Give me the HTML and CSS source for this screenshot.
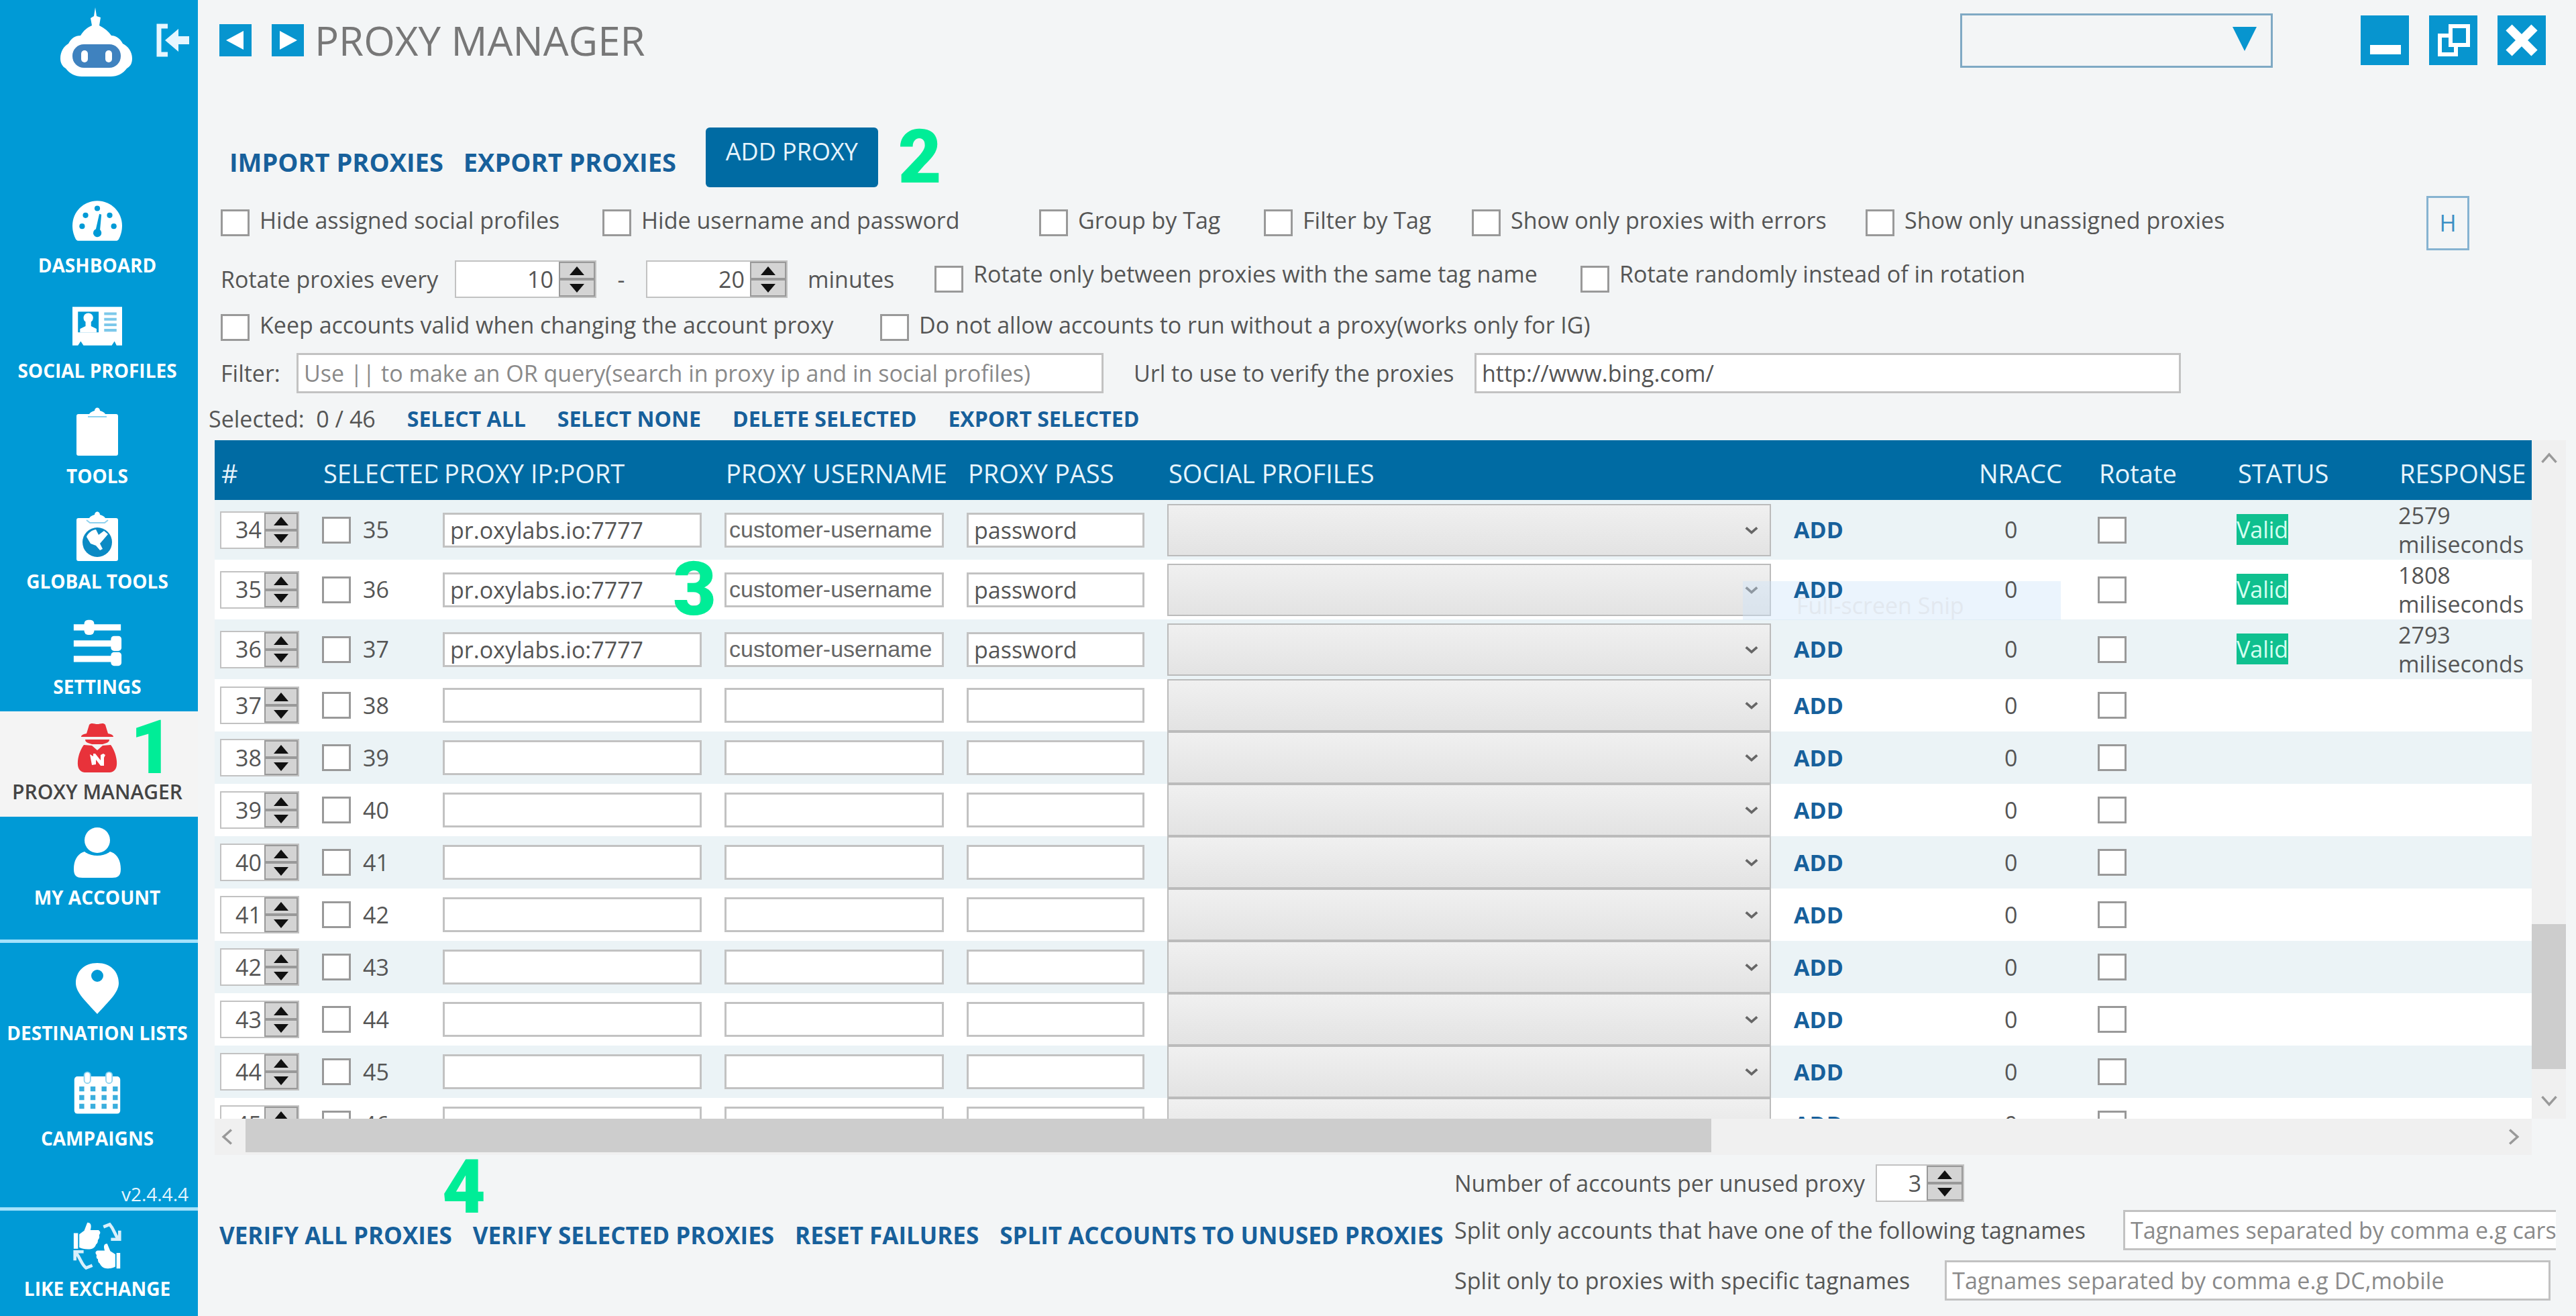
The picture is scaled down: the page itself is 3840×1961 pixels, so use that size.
FILE: index.html
```html
<!DOCTYPE html>
<html lang="en">
<head>
  <meta charset="UTF-8" />
  <meta name="viewport" content="width=device-width, initial-scale=1.0"/>
  <title>Proxy Manager</title>
  <link rel="stylesheet" href="styles.css">
</head>
<body>
  <!-- Sidebar -->
  <aside class="sidebar">
    <div class="brand">
      <svg class="logo" viewBox="0 0 110 104">
        <path fill="#fff" d="M53 0l2 13 6 2-2 12c8 4 14 9 18 15 8 0 14 6 17 12 8 4 14 12 14 22 0 8-3 12-8 15-6 8-14 12-24 12H33c-10 0-18-4-24-12-5-3-8-8-8-15 0-10 5-18 12-22 4-8 10-12 18-12 5-8 10-12 17-15l-2-11 5-3z"/>
        <rect x="19" y="55" width="72" height="35" rx="17" fill="#3f82bf"/>
        <rect x="32" y="64" width="10" height="18" rx="5" fill="#fff"/>
        <rect x="68" y="64" width="10" height="18" rx="5" fill="#fff"/>
      </svg>
      <button class="collapse" aria-label="Collapse menu">
        <svg viewBox="0 0 52 50"><path fill="none" stroke="#e6f6ff" stroke-width="7" d="M18 4H5v42h13"/><path fill="#e6f6ff" d="M14 25L34 8v11h16v12H34v11z"/></svg>
      </button>
    </div>
    <nav class="menu">
      <a href="#dashboard" class="item">
        <svg viewBox="0 0 72 64"><path fill="#fff" d="M36 3C16 3 0 19 0 39c0 8 2 14 5 20 1 1 2 2 4 2h54c2 0 3-1 4-2 3-6 5-12 5-20C72 19 56 3 36 3z"/><g fill="#009ad6"><circle cx="14" cy="40" r="4"/><circle cx="19" cy="24" r="4"/><circle cx="36" cy="14" r="4"/><circle cx="54" cy="24" r="4"/><circle cx="60" cy="40" r="4"/><path d="M39 22l3 1-2 22a6 6 0 1 1-6-1z"/></g></svg>
        DASHBOARD
      </a>
      <a href="#profiles" class="item">
        <svg viewBox="0 0 72 64"><path fill="#fff" d="M0 4h72v56h-8l-3-6-4 6H16l-4-6-4 6H0z"/><path fill="#009ad6" d="M8 11h30v30H8z"/><circle cx="23" cy="20" r="7" fill="#fff"/><path fill="#fff" d="M19 25h8v7l8 4v5H11v-5l8-4z"/><path stroke="#7cc8ea" stroke-width="4" d="M46 14h18M46 22h18M46 30h18M46 38h18"/></svg>
        SOCIAL PROFILES
      </a>
      <a href="#tools" class="item">
        <svg viewBox="0 0 72 76"><path fill="#fff" d="M8 12h16c2-3 5-4 8-5 0-6 8-6 8 0 3 1 6 2 8 5h16c2 0 3 1 3 3v56c0 2-1 3-3 3H8c-2 0-3-1-3-3V15c0-2 1-3 3-3z"/><path fill="none" stroke="#8fd2ef" stroke-width="2" d="M22 16h28"/></svg>
        TOOLS
      </a>
      <a href="#global" class="item">
        <svg viewBox="0 0 72 76"><path fill="#fff" d="M8 10h16c2-3 5-4 8-5 0-6 8-6 8 0 3 1 6 2 8 5h16c2 0 3 1 3 3v58c0 2-1 3-3 3H8c-2 0-3-1-3-3V13c0-2 1-3 3-3z"/><path fill="none" stroke="#8fd2ef" stroke-width="2" d="M20 13l5 4h22l5-4"/><circle cx="36" cy="46" r="22" fill="#0b8ac4"/><path fill="#fff" d="M20 38c2-6 8-10 14-11l4 8 8-6 6 5-12 14 4 8-4 2-6-7-8-3z"/></svg>
        GLOBAL TOOLS
      </a>
      <a href="#settings" class="item">
        <svg viewBox="0 0 80 76"><path stroke="#fff" stroke-width="10" d="M2 14h76M2 40h76M2 65h76"/><rect x="19" y="2" width="16" height="24" rx="6" fill="#fff"/><rect x="62" y="28" width="17" height="24" rx="5" fill="#fff"/><rect x="62" y="54" width="17" height="22" rx="5" fill="#fff"/></svg>
        SETTINGS
      </a>
      <a href="#proxy" class="item active">
        <svg viewBox="0 0 72 76"><path fill="#e8323a" d="M24 4c3-4 8-1 12-1s9-3 12 1l4 13c6 1 8 3 8 5H12c0-2 2-4 8-5zM18 26h36c0 3-2 4-4 5l-6 2H28l-6-2c-2-1-4-2-4-5zM16 34l12 1 8 7 8-7 12-1c4 5 8 14 9 24 1 11-3 16-10 17H17C10 74 6 69 7 58c1-10 5-19 9-24z"/><path fill="#fff" d="M25 48l5 3v-4h3l8 10v-8l4-2 3 2-2 4v12h-5l-7-9v7l-6 1z"/></svg>
        PROXY MANAGER
        <span class="step step-1">1</span>
      </a>
      <a href="#account" class="item">
        <svg viewBox="0 0 72 76"><ellipse cx="36" cy="19" rx="19" ry="19" fill="#fff"/><path fill="#fff" d="M17 36c10 8 28 8 38 0 10 3 16 12 16 26 0 10-4 13-13 13H14C5 75 1 72 1 62c0-14 6-23 16-26z"/></svg>
        MY ACCOUNT
      </a>
    </nav>
    <nav class="menu lists">
      <a href="#destinations" class="item">
        <svg viewBox="0 0 72 76"><path fill="#fff" fill-rule="evenodd" d="M36 0c20 0 32 13 32 30 0 14-15 27-32 46C19 57 4 44 4 30 4 13 16 0 36 0zm0 10a9 9 0 1 0 0 18 9 9 0 0 0 0-18z"/></svg>
        DESTINATION LISTS
      </a>
      <a href="#campaigns" class="item">
        <svg viewBox="0 0 80 72"><rect x="3" y="8" width="74" height="60" rx="5" fill="#fff"/><rect x="19" y="1" width="10" height="18" rx="5" fill="#fff" stroke="#8fd2ef" stroke-width="2"/><rect x="54" y="1" width="10" height="18" rx="5" fill="#fff" stroke="#8fd2ef" stroke-width="2"/><path stroke="#3aaedd" stroke-width="8" stroke-dasharray="8 10" d="M11 28h66M11 42h66M11 56h66"/></svg>
        CAMPAIGNS
      </a>
      <span class="version">v2.4.4.4</span>
    </nav>
    <nav class="menu">
      <a href="#exchange" class="item">
        <svg viewBox="0 0 80 76"><path fill="#fff" d="M2 18h7v25H2zM11 20l8-6 5-13c6 0 7 5 5 12h13c4 3 3 5 1 8 1 4 0 6-2 8 0 4-1 6-3 7-2 6-6 8-13 8-6 0-10-1-14-3zM77 50h-6v25h6zM69 52l-8-5-5-12c-6 0-6 5-4 11H40c-4 2-3 5-1 7-1 4 0 6 2 7 0 4 1 6 3 7 3 6 7 8 12 8 6 0 9-1 13-3z"/><path fill="none" stroke="#d9f0fb" stroke-width="5" d="M50 8l10-4c7 8 7 14 14 24M62 28h14V14M32 70l-10 4C14 68 14 60 6 50M18 48H4v14"/></svg>
        LIKE EXCHANGE
      </a>
    </nav>
  </aside>

  <main class="content">
    <!-- Title bar -->
    <header class="titlebar">
      <button class="arrow" aria-label="Back"><svg viewBox="0 0 48 48"><path fill="#fff" d="M10 24l26-14v28z"/></svg></button>
      <button class="arrow" aria-label="Forward"><svg viewBox="0 0 48 48"><path fill="#fff" d="M38 24L12 10v28z"/></svg></button>
      <h1>PROXY MANAGER</h1>
      <div class="picker">
        <select aria-label="Account"><option></option></select>
        <svg viewBox="0 0 36 36"><path fill="#0795cf" d="M0 0h36L18 36z"/></svg>
      </div>
      <div class="window-buttons">
        <button aria-label="Minimize"><svg viewBox="0 0 72 74"><path fill="#fff" d="M14 44h46v14H14z"/></svg></button>
        <button aria-label="Restore"><svg viewBox="0 0 72 74"><path fill="none" stroke="#fff" stroke-width="6" d="M32 16h26v28H32zM32 30H16v28h24V44"/></svg></button>
        <button aria-label="Close"><svg viewBox="0 0 72 74"><path fill="none" stroke="#fff" stroke-width="13" d="M17 18l38 38M55 18L17 56"/></svg></button>
      </div>
    </header>

    <div class="toolbar">
      <a href="#import">IMPORT PROXIES</a>
      <a href="#export">EXPORT PROXIES</a>
      <button class="add-proxy">ADD PROXY</button>
      <span class="step">2</span>
    </div>

    <!-- Options -->
    <div class="options row-hide">
      <label><input type="checkbox"><span>Hide assigned social profiles</span></label>
      <label><input type="checkbox"><span>Hide username and password</span></label>
      <label><input type="checkbox"><span>Group by Tag</span></label>
      <label><input type="checkbox"><span>Filter by Tag</span></label>
      <label><input type="checkbox"><span>Show only proxies with errors</span></label>
      <label><input type="checkbox"><span>Show only unassigned proxies</span></label>
      <button class="help">H</button>
    </div>
    <div class="options row-rotate">
      <label for="rotateFrom">Rotate proxies every</label>
      <div class="spin"><input id="rotateFrom" type="text" value="10"><button class="up" aria-label="Up"></button><button class="down" aria-label="Down"></button></div>
      <span class="dash">-</span>
      <div class="spin"><input type="text" value="20" aria-label="Rotate up to"><button class="up" aria-label="Up"></button><button class="down" aria-label="Down"></button></div>
      <span class="unit">minutes</span>
      <label><input type="checkbox"><span>Rotate only between proxies with the same tag name</span></label>
      <label><input type="checkbox"><span>Rotate randomly instead of in rotation</span></label>
    </div>
    <div class="options row-keep">
      <label><input type="checkbox"><span>Keep accounts valid when changing the account proxy</span></label>
      <label><input type="checkbox"><span>Do not allow accounts to run without a proxy(works only for IG)</span></label>
    </div>
    <div class="options row-filter">
      <label for="filter">Filter:</label>
      <input id="filter" class="text" type="text" placeholder="Use || to make an OR query(search in proxy ip and in social profiles)">
      <label for="verifyUrl">Url to use to verify the proxies</label>
      <input id="verifyUrl" class="text" type="text" value="http://www.bing.com/">
    </div>
    <div class="selection">
      <span>Selected:&nbsp; 0 / 46</span>
      <a href="#all">SELECT ALL</a>
      <a href="#none">SELECT NONE</a>
      <a href="#delete">DELETE SELECTED</a>
      <a href="#export-selected">EXPORT SELECTED</a>
    </div>

    <!-- Proxy table -->
    <div class="grid-area">
      <div class="table-wrap">
        <table>
          <colgroup>
            <col class="c-order"><col class="c-selected"><col class="c-ip"><col class="c-user"><col class="c-pass"><col class="c-social"><col class="c-add"><col class="c-nracc"><col class="c-rotate"><col class="c-status"><col class="c-response">
          </colgroup>
          <thead>
            <tr>
              <th>#</th><th>SELECTED</th><th>PROXY IP:PORT</th><th>PROXY USERNAME</th><th>PROXY PASS</th><th>SOCIAL PROFILES</th><th></th><th>NRACC</th><th>Rotate</th><th>STATUS</th><th>RESPONSE</th>
            </tr>
          </thead>
          <tbody id="proxyRows"></tbody>
        </table>
      </div>
      <div class="scroll-y">
        <button aria-label="Scroll up"><svg viewBox="0 0 24 24"><path d="M3 17l9-10 9 10"/></svg></button>
        <div class="thumb"></div>
        <button aria-label="Scroll down"><svg viewBox="0 0 24 24"><path d="M3 7l9 10 9-10"/></svg></button>
      </div>
    </div>
    <div class="scroll-x">
      <button aria-label="Scroll left"><svg viewBox="0 0 24 24"><path d="M17 3L7 12l10 9"/></svg></button>
      <div class="track"><div class="thumb"></div></div>
      <button aria-label="Scroll right"><svg viewBox="0 0 24 24"><path d="M7 3l10 9-10 9"/></svg></button>
    </div>

    <footer class="actions">
      <div class="links">
        <span class="step step-4">4</span>
        <a href="#verify-all">VERIFY ALL PROXIES</a>
        <a href="#verify-selected">VERIFY SELECTED PROXIES</a>
        <a href="#reset">RESET FAILURES</a>
        <a href="#split">SPLIT ACCOUNTS TO UNUSED PROXIES</a>
      </div>
      <div class="split">
        <div class="split-row">
          <label for="perProxy">Number of accounts per unused proxy</label>
          <div class="spin small"><input id="perProxy" type="text" value="3"><button class="up" aria-label="Up"></button><button class="down" aria-label="Down"></button></div>
        </div>
        <div class="split-row accounts">
          <label for="accountTags">Split only accounts that have one of the following tagnames</label>
          <input id="accountTags" class="text" type="text" placeholder="Tagnames separated by comma e.g cars">
        </div>
        <div class="split-row proxies">
          <label for="proxyTags">Split only to proxies with specific tagnames</label>
          <input id="proxyTags" class="text" type="text" placeholder="Tagnames separated by comma e.g DC,mobile">
        </div>
      </div>
    </footer>
  </main>

  <script>
    const responses = { 34: 2579, 35: 1808, 36: 2793 };
    const proxyRows = document.getElementById('proxyRows');

    function addRow(order) {
      const response = responses[order];
      const ip = response ? 'pr.oxylabs.io:7777' : '';
      const user = response ? 'customer-username' : '';
      const pass = response ? 'password' : '';
      const tr = document.createElement('tr');
      if (response) tr.className = 'filled';
      tr.innerHTML = `
        <td><div class="spin tiny"><input type="text" value="${order}" aria-label="Order"><button class="up" aria-label="Up"></button><button class="down" aria-label="Down"></button></div></td>
        <td><label><input type="checkbox">${order + 1}</label></td>
        <td><input class="text" type="text" value="${ip}" aria-label="Proxy IP and port">${order === 35 ? '<span class="step step-3">3</span>' : ''}</td>
        <td><input class="text user" type="text" value="${user}" aria-label="Proxy username"></td>
        <td><input class="text" type="text" value="${pass}" aria-label="Proxy password"></td>
        <td><div class="profiles"><select aria-label="Social profiles"><option></option></select><svg viewBox="0 0 24 24"><path d="M3 8l9 8 9-8"/></svg></div></td>
        <td>${order === 35 ? '<span class="snip">Full-screen Snip</span>' : ''}<a class="add" href="#add">ADD</a></td>
        <td class="nracc">0</td>
        <td><input type="checkbox" aria-label="Rotate"></td>
        <td>${response ? '<span class="valid">Valid</span>' : ''}</td>
        <td>${response ? response + '<br>miliseconds' : ''}</td>`;
      proxyRows.appendChild(tr);
    }

    for (let order = 34; order <= 45; order++) addRow(order);
  </script>
</body>
</html>
```
FILE: styles.css
```css
* { box-sizing: border-box; }
body { font-family: "Open Sans", "Noto Sans", sans-serif; font-size: 34px; line-height: 44px; margin: 0; color: #555; background: #f3f5f6; display: flex; height: 100vh; overflow: hidden; }
a { color: #17609b; text-decoration: none; font-weight: 700; white-space: nowrap; }
button, input, select { font: inherit; color: inherit; margin: 0; padding: 0; border: 0; border-radius: 0; }
button { cursor: pointer; }
svg { display: block; }
label { white-space: nowrap; }

/* Sidebar */
.sidebar { width: 295px; flex: none; background: #009ad6; display: flex; flex-direction: column; }
.brand { height: 276px; flex: 1; display: flex; align-items: flex-start; padding: 11px 8px 0 88px; gap: 32px; }
.logo { width: 112px; height: 104px; }
.collapse { background: none; width: 52px; height: 50px; margin-top: 24px; }
.item { position: relative; height: 157px; padding: 16px 5px 0 0; display: flex; flex-direction: column; align-items: center; gap: 6px; color: #fff; font-size: 28px; line-height: 44px; }
.item svg { width: 74px; height: 76px; }
.item.active { background: #f4f4f4; color: #444; font-size: 30px; font-weight: 600; }
.menu { padding-bottom: 26px; }
.lists { border-top: 5px solid #a5e2fb; border-bottom: 5px solid #a5e2fb; padding: 14px 0 4px; height: 404px; display: flex; flex-direction: column; }
.lists + .menu { padding-bottom: 0; }
.lists + .menu .item { padding-top: 14px; gap: 4px; }
.version { color: #e6f6ff; margin: auto 14px 0 auto; font-size: 28px; line-height: 32px; }

/* Numbered steps */
.step { font-family: Roboto, Inter, sans-serif; font-weight: 900; font-size: 112px; line-height: 80px; color: #00ed97; }
.step-1 { position: absolute; left: 194px; top: 14px; }
.step-3 { position: absolute; right: 4px; top: 4px; z-index: 1; }
.step-4 { position: absolute; left: 364px; top: 8px; }

/* Title bar */
.content { flex: 1; min-width: 0; display: flex; flex-direction: column; }
.titlebar { height: 120px; flex: none; display: flex; align-items: center; padding: 0 45px 0 32px; }
.arrow { width: 48px; height: 48px; background: #0795cf; margin-right: 30px; }
.arrow + .arrow { margin-right: 16px; }
h1 { font-size: 60px; font-weight: 400; line-height: 72px; color: #777; margin: 0; }
.picker { position: relative; width: 466px; height: 81px; margin-left: auto; }
.picker select { appearance: none; width: 100%; height: 100%; background: none; border: 3px solid #7fa9c4; }
.picker svg { position: absolute; right: 24px; top: 20px; width: 36px; height: 36px; pointer-events: none; }
.window-buttons { display: flex; gap: 30px; margin-left: 131px; }
.window-buttons button { width: 72px; height: 74px; background: #0795cf; }

.toolbar { height: 168px; flex: none; display: flex; align-items: center; padding: 60px 0 0 47px; gap: 30px; }
.toolbar a { font-size: 38px; padding-top: 14px; }
.add-proxy { width: 257px; height: 89px; margin-left: 14px; padding-bottom: 16px; background: #006ba3; border-radius: 6px; color: #e6f4fc; font-size: 36px; }

/* Options */
.options { flex: none; display: grid; align-items: center; padding-left: 34px; }
.options label { display: flex; align-items: center; gap: 15px; }
.options label span { padding-bottom: 8px; }
input[type="checkbox"] { appearance: none; flex: none; width: 43px; height: 40px; border: 3px solid #999; background: #fff; display: block; }
.row-hide { height: 88px; grid-template-columns: 569px 651px 335px 310px 587px 1fr 223px; }
.help { width: 64px; height: 81px; border: 3px solid #86b3d1; background: none; color: #3b8fc4; }
.row-rotate { height: 80px; grid-template-columns: 349px 211px 74px 211px 219px 963px 1fr; }
.row-rotate label span { padding-bottom: 16px; }
.dash { text-align: center; }
.unit { padding-left: 30px; }
.row-keep { height: 64px; grid-template-columns: 983px 1fr; }
.row-filter { height: 72px; grid-template-columns: 113px 1203px 553px 1053px; }
.row-filter label:nth-of-type(2) { padding-left: 45px; }
.text { width: 100%; height: 60px; padding: 0 8px; border: 3px solid #c2c2c2; background: #fff; }
.text::placeholder { color: #8a8a8a; opacity: 1; }

.spin { display: grid; grid-template-columns: 1fr 54px; grid-template-rows: 1fr 1fr; height: 56px; background: #fff; border: 2px solid #c2c2c2; }
.spin input { grid-row: span 2; width: 100%; min-width: 0; background: none; text-align: right; padding-right: 8px; }
.spin button { background: #d4d4d4; border: 2px solid #999; display: flex; align-items: center; justify-content: center; }
.up::before, .down::before { content: ""; border: 11px solid transparent; }
.up::before { border-top: 0; border-bottom: 13px solid #111; }
.down::before { border-bottom: 0; border-top: 13px solid #111; }
.spin.small { width: 132px; }
.spin.tiny { width: 118px; grid-template-columns: 1fr 50px; }
.spin.tiny input { padding-right: 4px; }

.selection { height: 64px; flex: none; display: flex; align-items: center; gap: 47px; padding-left: 16px; }
.selection a { font-size: 32px; }

/* Proxy table */
.grid-area { flex: 1; min-height: 0; display: flex; padding: 0 15px 0 25px; }
.table-wrap { flex: 1; min-width: 0; overflow: hidden; }
table { width: 100%; table-layout: fixed; border-collapse: collapse; }
.c-order { width: 152px; }
.c-selected { width: 180px; }
.c-ip { width: 420px; }
.c-user { width: 361px; }
.c-pass { width: 299px; }
.c-add { width: 274px; }
.c-nracc { width: 179px; }
.c-rotate { width: 207px; }
.c-status { width: 241px; }
.c-response { width: 207px; }
th { height: 89px; padding: 8px 0 0 10px; background: #006ba3; color: #e6f4fc; font-size: 38px; font-weight: 400; text-align: left; white-space: nowrap; overflow: hidden; }
td { position: relative; height: 78px; padding: 0 26px 0 8px; line-height: 43px; }
tr { background: #fff; }
tbody tr:nth-child(odd) { background: #ebf3f6; }
.filled td { height: 89px; }
td:last-child { padding-right: 0; }
td label { display: flex; align-items: center; gap: 18px; }
td .text { display: block; height: 52px; }
td .user { font-family: "Liberation Sans", Arial, sans-serif; padding: 0 4px; color: #666; }
.profiles { position: relative; }
.profiles select { appearance: none; display: block; width: 100%; height: 78px; border: 2px solid #bbb; background: linear-gradient(#f0f0f0, #e3e3e3); }
.profiles svg { position: absolute; right: 18px; top: 28px; width: 22px; height: 22px; pointer-events: none; }
.profiles path { fill: none; stroke: #666; stroke-width: 4; }
td.nracc { padding-left: 48px; }
.add { position: relative; }
.valid { background: #0fc08f; color: #d5fff0; }
.snip { position: absolute; left: -68px; top: 32px; width: 474px; height: 58px; padding-left: 80px; line-height: 72px; background: rgba(205, 228, 250, 0.4); color: #e2e8ef; pointer-events: none; }

.scroll-y { width: 51px; flex: none; background: #f0f0f0; display: flex; flex-direction: column; justify-content: space-between; }
.scroll-y button, .scroll-x button { width: 51px; height: 54px; background: none; display: flex; align-items: center; justify-content: center; }
.scroll-x button { width: 46px; padding-right: 8px; }
.scroll-y svg, .scroll-x svg { width: 28px; height: 28px; }
.scroll-y path, .scroll-x path { fill: none; stroke: #999; stroke-width: 3; }
.thumb { background: #cdcdcd; }
.scroll-y .thumb { height: 216px; margin-top: auto; margin-bottom: 20px; }
.scroll-x { height: 54px; flex: none; margin: 0 66px 0 25px; background: #f0f0f0; display: flex; }
.track { flex: 1; }
.track .thumb { width: 65%; height: 50px; }

/* Bottom actions */
.actions { position: relative; height: 240px; flex: none; display: grid; grid-template-columns: 1841px 1fr; padding-left: 32px; }
.links { display: flex; align-items: center; gap: 31px; }
.links a { font-size: 35px; }
.split { padding-top: 7px; }
.split-row { display: flex; align-items: center; height: 70px; gap: 16px; }
.split-row .text { flex: 1; min-width: 0; }
.accounts { padding-right: 30px; gap: 56px; }
.accounts .text { border-right: 0; padding-right: 0; }
.proxies { height: 80px; padding-right: 38px; gap: 52px; }
```
